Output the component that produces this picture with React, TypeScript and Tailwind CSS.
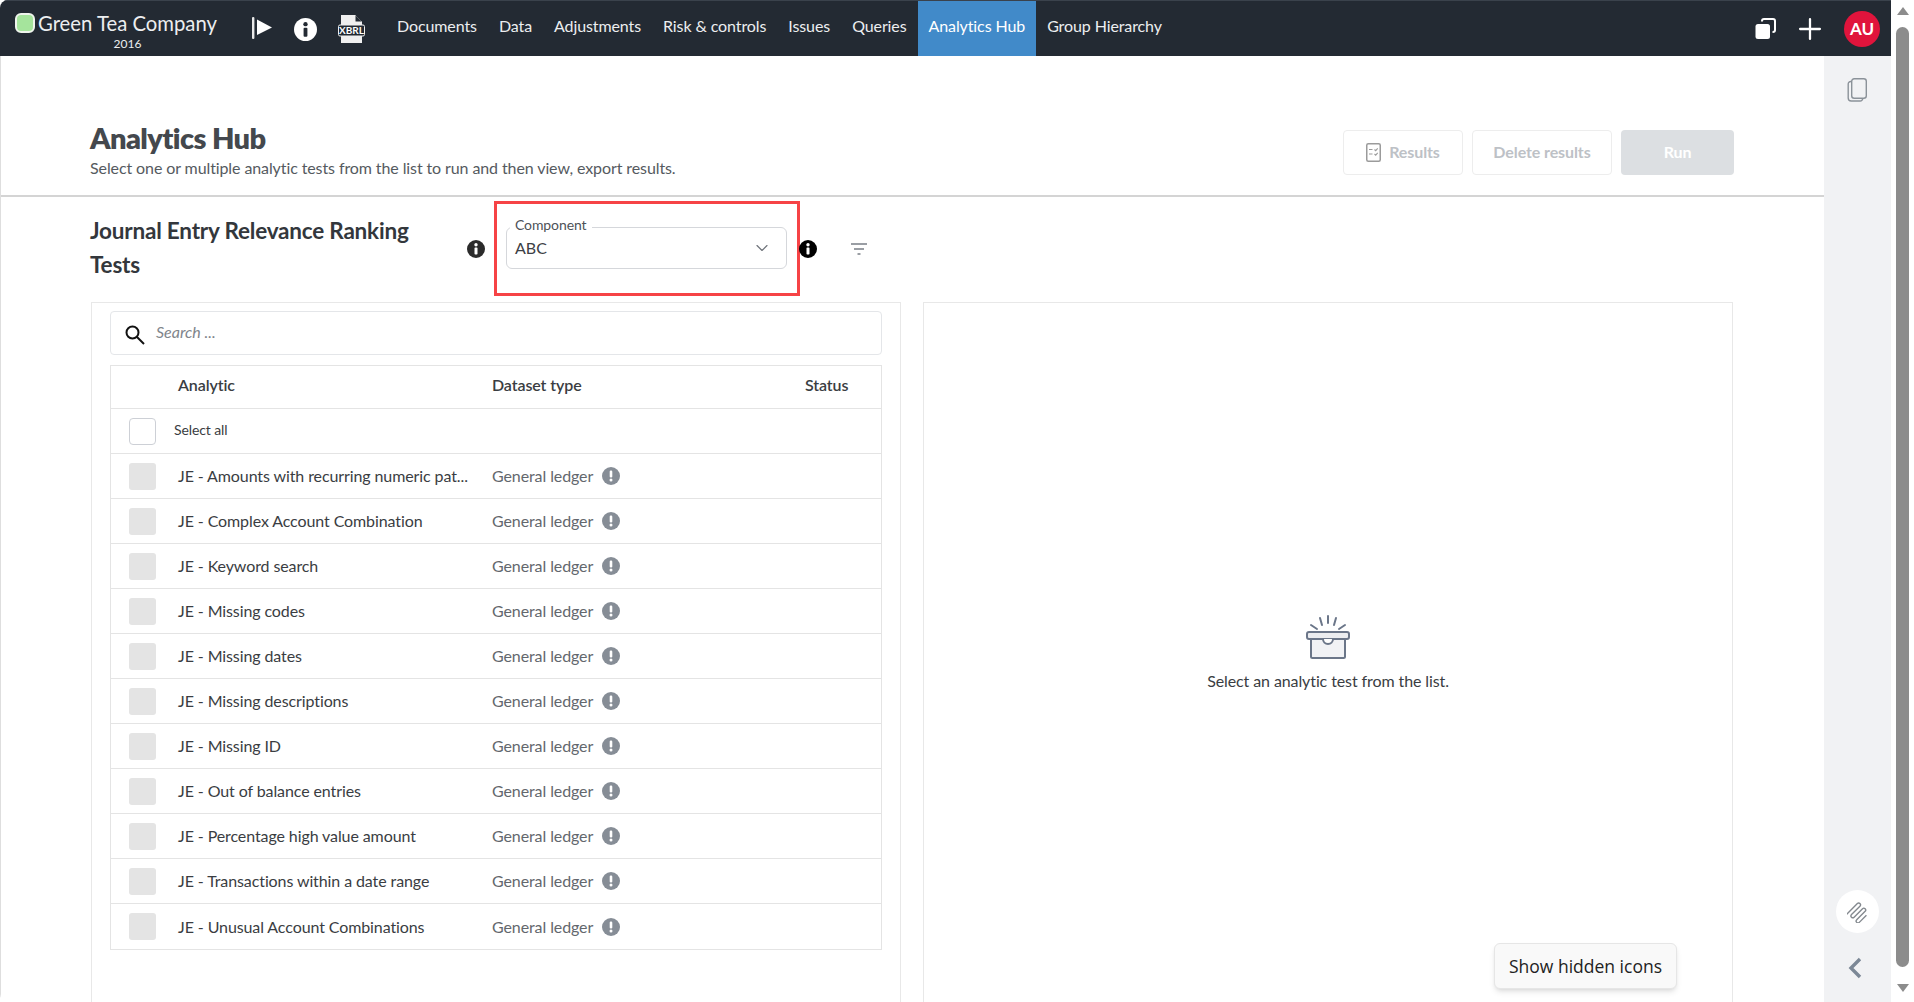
import React from 'react';
import { ChevronDown, Plus } from 'lucide-react';

const navItems = ['Documents', 'Data', 'Adjustments', 'Risk & controls', 'Issues', 'Queries', 'Analytics Hub', 'Group Hierarchy'];

const analytics = [
  'JE - Amounts with recurring numeric pat...',
  'JE - Complex Account Combination',
  'JE - Keyword search',
  'JE - Missing codes',
  'JE - Missing dates',
  'JE - Missing descriptions',
  'JE - Missing ID',
  'JE - Out of balance entries',
  'JE - Percentage high value amount',
  'JE - Transactions within a date range',
  'JE - Unusual Account Combinations',
];

function InfoDot({ size, fill, mark }: { size: number; fill: string; mark: string }) {
  return (
    <svg width={size} height={size} viewBox="0 0 18 18" className="shrink-0">
      <circle cx="9" cy="9" r="9" fill={fill} />
      <circle cx="9" cy="4.8" r="1.7" fill={mark} />
      <rect x="7.5" y="7.6" width="3" height="7" rx="0.8" fill={mark} />
    </svg>
  );
}

function WarnDot() {
  return (
    <svg width="18" height="18" viewBox="0 0 18 18" className="shrink-0">
      <circle cx="9" cy="9" r="9" fill="#868d96" />
      <rect x="7.7" y="3.6" width="2.6" height="7" rx="1.1" fill="#fff" />
      <circle cx="9" cy="13" r="1.5" fill="#fff" />
    </svg>
  );
}

function TopNav() {
  return (
    <div className="flex h-14 shrink-0 items-stretch border-t border-[#3a424c] bg-[#232a33] text-[#eceef0]">
      <div className="flex w-[252px] shrink-0 pl-[15px]">
        <div className="mt-3 h-5 w-5 shrink-0 rounded-[6px] border-2 border-[#eef4ec] bg-[#a5e49c]" />
        <div className="ml-[3px] flex flex-col items-center">
          <span className="mt-[8px] text-[20.3px] leading-7">Green Tea Company</span>
          <span className="mt-[-1px] text-[12px] leading-4">2016</span>
        </div>
      </div>
      <div className="flex items-center">
        <svg width="20" height="22" viewBox="0 0 20 22" className="mt-[-1px]">
          <rect x="0" y="0" width="2.4" height="22" rx="1" fill="#e8e8e8" />
          <path d="M5 2.5 20 10.5 5 18z" fill="#fff" />
        </svg>
        <div className="ml-[22px] mt-[1px]">
          <InfoDot size={23} fill="#fff" mark="#232a33" />
        </div>
        <svg width="27" height="28" viewBox="0 0 27 28" className="ml-[21px]">
          <path d="M3 0h14l7 7v21H3z" fill="#f0f0f0" />
          <path d="M17 0v7h7" fill="#232a33" stroke="#f0f0f0" strokeWidth="1" />
          <rect x="0.5" y="10" width="26" height="11" rx="1.5" fill="#232a33" stroke="#f0f0f0" />
          <text x="13.5" y="19" textAnchor="middle" fontSize="10" fontWeight="700" fill="#fff" fontFamily="Lato, sans-serif">XBRL</text>
        </svg>
      </div>
      <div className="ml-[21px] flex items-stretch text-[16px] tracking-[-0.1px]">
        {navItems.map((item) =>
          item === 'Analytics Hub' ? (
            <span key={item} className="flex items-center bg-[#418ac9] px-[11px] pb-[5px] text-white">
              {item}
            </span>
          ) : (
            <span key={item} className="flex items-center px-[11px] pb-[5px]">
              {item}
            </span>
          ),
        )}
      </div>
      <div className="ml-auto flex items-center pr-[11px]">
        <svg width="21" height="21" viewBox="0 0 21 21">
          <path d="M7 3.5V3a2 2 0 0 1 2-2h9a2 2 0 0 1 2 2v9a2 2 0 0 1-2 2h-.5" fill="none" stroke="#fff" strokeWidth="2" />
          <rect x="0.5" y="6" width="14.5" height="15" rx="2.5" fill="#fff" />
        </svg>
        <Plus size={34} strokeWidth={1.6} className="ml-[17px] text-white" />
        <div className="ml-[17px] flex h-9 w-9 items-center justify-center rounded-full bg-[#e0143c] text-[17px] font-bold text-white">AU</div>
      </div>
    </div>
  );
}

function PageHeader() {
  return (
    <div className="flex h-[141px] shrink-0 items-start justify-between border-b-2 border-[#d4d4d4] pl-[89px] pr-[90px] pt-[65px]">
      <div>
        <h1 className="text-[29px] leading-[34px] font-extrabold tracking-[-0.6px] text-[#44484d]">Analytics Hub</h1>
        <p className="mt-[1px] text-[16px] leading-6 tracking-[-0.1px] text-[#555a60]">Select one or multiple analytic tests from the list to run and then view, export results.</p>
      </div>
      <div className="mt-[9px] flex gap-[9px] text-[16px] font-bold tracking-[-0.1px]">
        <button className="flex h-[45px] w-[120px] items-center justify-center gap-[8px] rounded-[4px] border border-[#ededed] pb-[1px] text-[#bdc1c6]">
          <svg width="15" height="19" viewBox="0 0 15 19">
            <rect x="0.75" y="0.75" width="13.5" height="17.5" rx="1.5" fill="none" stroke="#9b9b9b" strokeWidth="1.5" />
            <path d="M3 6.5h3.5M3 11h3.5M8.5 6.5l1.2 1.2 2-2.4M8.5 11l1.2 1.2 2-2.4" fill="none" stroke="#9b9b9b" strokeWidth="1.1" />
          </svg>
          Results
        </button>
        <button className="h-[45px] w-[140px] rounded-[4px] border border-[#ededed] pb-[1px] text-[#bdc1c6]">Delete results</button>
        <button className="h-[45px] w-[113px] rounded-[4px] bg-[#dcdfe2] pb-[1px] text-white">Run</button>
      </div>
    </div>
  );
}

function FilterBar() {
  return (
    <div className="mt-[4px] flex h-[95px] shrink-0 items-center pl-[89px]">
      <h2 className="w-[377px] pb-[2px] pr-10 text-[22.5px] leading-[34px] font-bold tracking-[-0.2px] text-[#33373c]">Journal Entry Relevance Ranking Tests</h2>
      <InfoDot size={18} fill="#2b2b2b" mark="#fff" />
      <div className="ml-[9px] h-[95px] w-[306px] border-[3px] border-[#f64346] pl-[9px] pt-[23px]">
        <div className="relative flex h-[42px] w-[281px] items-center justify-between rounded-[6px] border border-[#d5d7db] pb-[1px] pl-[8px] pr-[14px] text-[16px] text-[#3d4045]">
          <span className="absolute left-[3px] top-[-12px] bg-white px-[5px] text-[14px] leading-[18px] tracking-[-0.1px] text-[#4d5157]">Component</span>
          <span>ABC</span>
          <ChevronDown size={20} strokeWidth={1.4} className="text-[#6f747b]" />
        </div>
      </div>
      <div className="ml-[-1px]">
        <InfoDot size={18} fill="#000" mark="#fff" />
      </div>
      <svg width="18" height="14" viewBox="0 0 18 14" className="ml-[33px]">
        <path d="M1 2h16M4 7h10M7.5 12h3" stroke="#7a7f86" strokeWidth="1.6" />
      </svg>
    </div>
  );
}

function AnalyticTable() {
  return (
    <div className="mt-[10px] border border-[#e4e4e4]">
      <div className="grid h-[43px] grid-cols-[67px_314px_313px_1fr] items-center border-b border-[#e4e4e4] pb-[5px] text-[16px] font-semibold tracking-[-0.1px] text-[#3a3d42]">
        <span />
        <span>Analytic</span>
        <span>Dataset type</span>
        <span>Status</span>
      </div>
      <div className="flex h-[45px] items-center border-b border-[#e4e4e4] pl-[18px]">
        <span className="h-[27px] w-[27px] rounded-[4px] border border-[#cdd0d6]" />
        <span className="ml-[18px] pb-[3px] text-[14px] tracking-[-0.1px] text-[#3a3d42]">Select all</span>
      </div>
      {analytics.map((name) => (
        <div key={name} className="grid h-[45px] grid-cols-[67px_314px_313px_1fr] items-center border-b border-[#e4e4e4] last:border-b-0">
          <span className="ml-[18px] h-[27px] w-[27px] rounded-[3px] bg-[#e4e4e4]" />
          <span className="text-[16px] tracking-[-0.1px] text-[#3a3d42]">{name}</span>
          <span className="flex items-center gap-[9px] text-[16px] tracking-[-0.1px] text-[#63676d]">
            General ledger
            <WarnDot />
          </span>
          <span />
        </div>
      ))}
    </div>
  );
}

function EmptyBox() {
  return (
    <svg width="44" height="44" viewBox="0 0 44 44">
      <path d="M22 1v7M14 3l2 7M30 3l-2 7M5 10l6 4M39 10l-6 4" stroke="#6b7689" strokeWidth="2" strokeLinecap="round" />
      <rect x="5" y="23" width="34" height="20" rx="1.5" fill="#f1f2f5" stroke="#6b7689" strokeWidth="2" />
      <rect x="1" y="17" width="42" height="7" rx="2" fill="#ecedf0" stroke="#6b7689" strokeWidth="2" />
      <path d="M17 24a5 5 0 0 0 10 0" fill="#fff" stroke="#6b7689" strokeWidth="2" />
    </svg>
  );
}

function SideRail() {
  return (
    <div className="flex w-[67px] shrink-0 flex-col items-center bg-[#f1f2f4]">
      <svg width="20" height="24" viewBox="0 0 20 24" className="ml-[-2px] mt-[22px]" fill="none" stroke="#8b9299" strokeWidth="1.4">
        <rect x="4.7" y="0.7" width="14.6" height="19.6" rx="2.5" />
        <path d="M4.7 3.5h-1a2.5 2.5 0 0 0-2.5 2.5v14a3 3 0 0 0 3 3h9a2.5 2.5 0 0 0 2.5-2.5v-.2" />
      </svg>
      <div className="mt-auto flex h-[43px] w-[43px] items-center justify-center rounded-full bg-white">
        <svg width="22" height="22" viewBox="0 0 24 24" fill="none" stroke="#84898f" strokeWidth="1.5">
          <g transform="rotate(45 12 12)">
            <path d="M5 23V6a2 2 0 0 1 4 0v13a2 2 0 0 0 4 0V6a2 2 0 0 1 4 0v13a2 2 0 0 0 4 0V8" />
          </g>
        </svg>
      </div>
      <svg width="14" height="22" viewBox="0 0 14 22" className="mb-[23px] ml-[-5px] mt-[24px]" fill="none" stroke="#7c8896" strokeWidth="3.4">
        <path d="M12 2 3 11l9 9" />
      </svg>
    </div>
  );
}

function ScrollBar() {
  return (
    <div className="flex w-[23px] shrink-0 flex-col items-center bg-white">
      <div className="mt-[7px] h-0 w-0 border-x-[6px] border-b-[8px] border-x-transparent border-b-[#8c8c8c]" />
      <div className="mt-[12px] h-[940px] w-[13px] rounded-full bg-[#8c8c8c]" />
      <div className="mt-[17px] h-0 w-0 border-x-[6px] border-t-[8px] border-x-transparent border-t-[#8c8c8c]" />
    </div>
  );
}

export default function App() {
  return (
    <div className="relative flex h-[1002px] w-[1914px] overflow-hidden rounded-[8px] bg-white [font-family:Lato,sans-serif]">
      <div className="flex min-w-0 flex-1 flex-col">
        <TopNav />
        <div className="flex min-h-0 flex-1">
          <div className="flex min-w-0 flex-1 flex-col border-l border-[#dedede]">
            <PageHeader />
            <FilterBar />
            <div className="mt-[6px] flex min-h-0 flex-1 gap-[22px] pl-[90px]">
              <div className="w-[810px] border border-b-0 border-[#e8e8e8] pl-[18px] pr-[18px] pt-[8px]">
                <div className="flex h-[44px] items-center rounded-[4px] border border-[#e4e6e9] pl-[13px]">
                  <svg width="22" height="22" viewBox="0 0 22 22" fill="none" stroke="#111" strokeWidth="2" className="mt-[3px]">
                    <circle cx="8.5" cy="8.5" r="6" />
                    <path d="m13 13 7 7" />
                  </svg>
                  <span className="ml-[10px] pb-[2px] text-[16px] italic text-[#80858b]">Search ...</span>
                </div>
                <AnalyticTable />
              </div>
              <div className="flex w-[810px] flex-col items-center border border-b-0 border-[#e8e8e8] pt-[312px]">
                <EmptyBox />
                <p className="mt-[10px] text-[16px] leading-6 tracking-[-0.1px] text-[#3a3d42]">Select an analytic test from the list.</p>
              </div>
            </div>
          </div>
          <SideRail />
        </div>
      </div>
      <ScrollBar />
      {/* system tray tooltip sits over the page */}
      <div className="absolute left-[1494px] top-[943px] flex h-[46px] w-[183px] items-center justify-center rounded-[6px] border border-[#e6e6e6] bg-[#f9f9f9] text-[17.5px] text-[#222] shadow-md [font-family:'Open_Sans',sans-serif]">
        Show hidden icons
      </div>
    </div>
  );
}
